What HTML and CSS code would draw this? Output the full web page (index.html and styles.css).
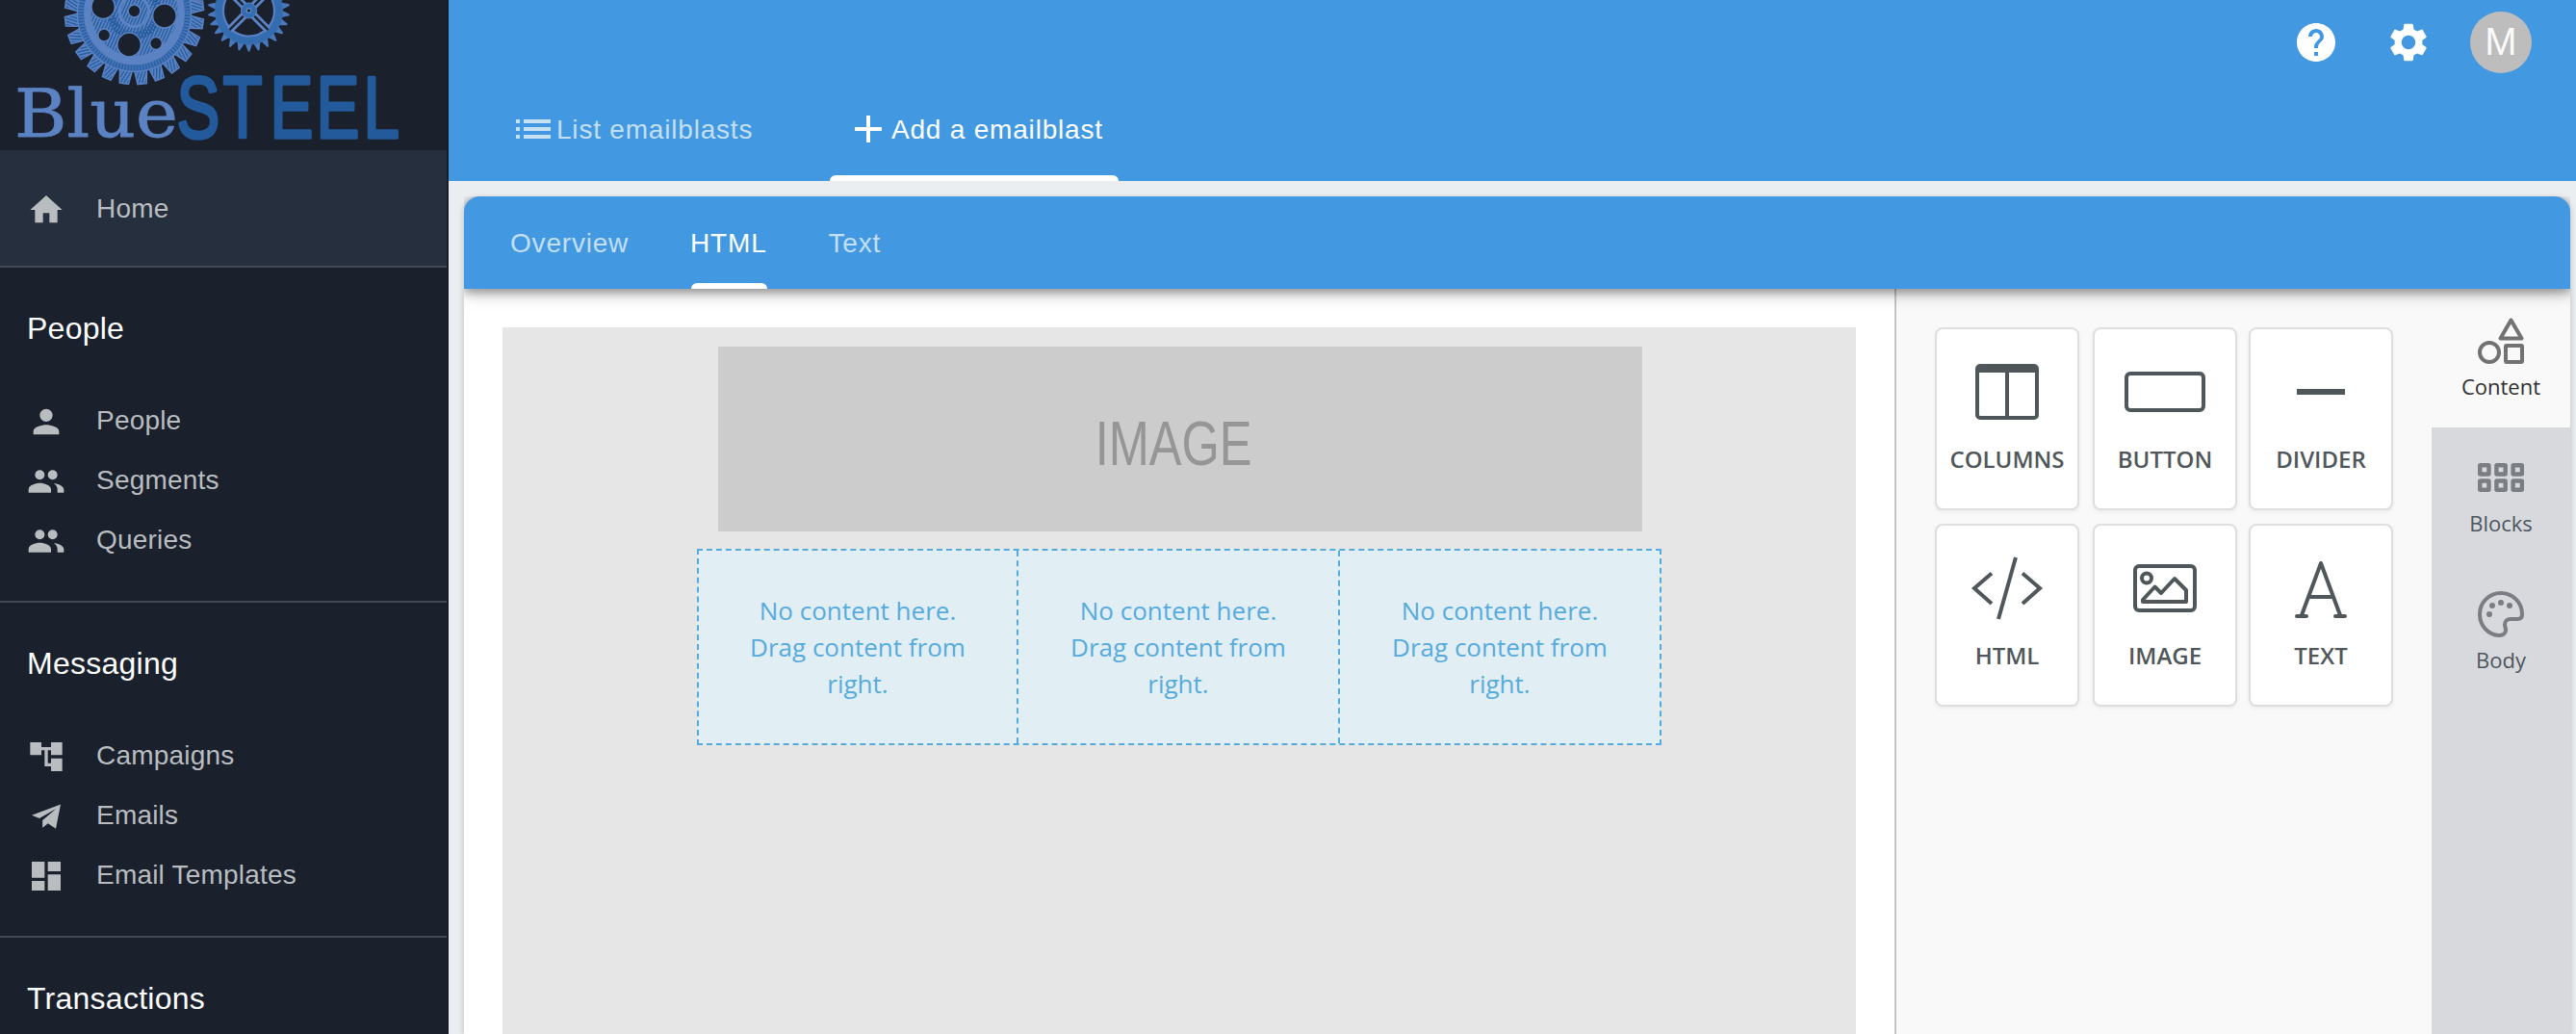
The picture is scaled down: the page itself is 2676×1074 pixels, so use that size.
FILE: index.html
```html
<!DOCTYPE html>
<html lang="en">
<head>
<meta charset="utf-8">
<title>BlueSteel - Add a emailblast</title>
<link rel="stylesheet" href="styles.css">
</head>
<body>
<div class="app">
  <aside class="sidebar">
    <svg class="logo" viewBox="0 0 464 156" role="img" aria-label="BlueSTEEL">
      <defs>
        <path id="tooth" d="M-6.500 60L-4.800 73.500H4.800L6.500 60Z"/>
        <path id="spike" d="M-3.800 34L-.8 42.500H.8L3.800 34Z"/>
        <pattern id="hatch" width="3.200" height="3.200" patternUnits="userSpaceOnUse" patternTransform="rotate(24)">
          <rect width="3.200" height="3.200" fill="#5b82c2"/><rect width="1.300" height="3.200" fill="#225a9b"/>
        </pattern>
      </defs>
      <g transform="translate(139.500 14) scale(.98 1)">
        <g class="tooth">
          <use href="#tooth" transform="rotate(-111.500)"/><use href="#tooth" transform="rotate(-96.500)"/>
          <use href="#tooth" transform="rotate(-81.500)"/><use href="#tooth" transform="rotate(-66.500)"/>
          <use href="#tooth" transform="rotate(-51.500)"/><use href="#tooth" transform="rotate(-36.500)"/>
          <use href="#tooth" transform="rotate(-21.500)"/><use href="#tooth" transform="rotate(-6.500)"/>
          <use href="#tooth" transform="rotate(8.500)"/><use href="#tooth" transform="rotate(23.500)"/>
          <use href="#tooth" transform="rotate(38.500)"/><use href="#tooth" transform="rotate(53.500)"/>
          <use href="#tooth" transform="rotate(68.500)"/><use href="#tooth" transform="rotate(83.500)"/>
          <use href="#tooth" transform="rotate(98.500)"/>
        </g>
        <circle r="61" fill="#5b82c2"/>
        <circle r="56.500" class="rim"/>
        <circle r="56.500" class="rim-lines"/>
        <circle cy="-2" r="46" fill="url(#hatch)"/>
        <circle cy="-2" r="25" class="hub-shade"/>
        <circle cy="-2" r="15.500" fill="url(#hatch)" stroke="#5b82c2" stroke-width="3"/>
        <g class="holes">
          <circle cx="-33" cy="-7" r="12.500"/><circle cx="32" cy="2.500" r="12.500"/>
          <circle cx="-5.500" cy="32.500" r="12.500"/><circle cx="-32" cy="22.500" r="6.500"/>
          <circle cx="23" cy="31" r="6.500"/><circle cy="-2.500" r="6.500"/>
        </g>
      </g>
      <g transform="translate(258.500 11)">
        <g fill="#4a78bb">
          <use href="#spike" transform="rotate(-112)"/><use href="#spike" transform="rotate(-98)"/>
          <use href="#spike" transform="rotate(-84)"/><use href="#spike" transform="rotate(-70)"/>
          <use href="#spike" transform="rotate(-56)"/><use href="#spike" transform="rotate(-42)"/>
          <use href="#spike" transform="rotate(-28)"/><use href="#spike" transform="rotate(-14)"/>
          <use href="#spike"/><use href="#spike" transform="rotate(14)"/>
          <use href="#spike" transform="rotate(28)"/><use href="#spike" transform="rotate(42)"/>
          <use href="#spike" transform="rotate(56)"/><use href="#spike" transform="rotate(70)"/>
          <use href="#spike" transform="rotate(84)"/><use href="#spike" transform="rotate(98)"/>
        </g>
        <circle r="31" fill="none" stroke="#346cb0" stroke-width="9"/>
        <circle r="26.500" fill="none" stroke="#5b82c2" stroke-width="2"/>
        <path d="M-20 20L20-20M-20-20L20 20" stroke="#5b82c2" stroke-width="8"/>
        <path d="M-20 20L20-20M-20-20L20 20" stroke="#1a202c" stroke-width="2.400"/>
        <circle r="8" fill="#346cb0" stroke="#5b82c2"/>
        <circle r="2.300" fill="#1a202c" stroke="#5b82c2" stroke-width="1.500"/>
      </g>
      <text class="logo-blue" x="15" y="142" textLength="170" lengthAdjust="spacingAndGlyphs">Blue</text>
      <text class="logo-steel" transform="scale(.74 1)" y="143" x="248 313 379 444 510">STEEL</text>
    </svg>
    <a class="nav-item home">
      <svg class="ico" viewBox="0 0 24 24"><path d="M10 20v-6h4v6h5v-8h3L12 3 2 12h3v8z"/></svg>Home</a>
    <section class="group">
      <h2>People</h2>
      <a class="nav-item"><svg class="ico" viewBox="0 0 24 24"><path d="M12 12c2.210 0 4-1.790 4-4s-1.790-4-4-4-4 1.790-4 4 1.790 4 4 4zm0 2c-2.670 0-8 1.340-8 4v2h16v-2c0-2.660-5.330-4-8-4z"/></svg>People</a>
      <a class="nav-item"><svg class="ico" viewBox="0 0 24 24"><path d="M16.670 13.130C18.040 14.060 19 15.320 19 17v2h4v-2c0-2.180-3.570-3.470-6.330-3.870zM8 11a3 3 0 1 0 0-6 3 3 0 0 0 0 6zM16 11a3 3 0 1 0 0-6 3 3 0 0 0 0 6zM8 13c-2.670 0-7 1.340-7 4v2h14v-2c0-2.660-4.330-4-7-4z"/></svg>Segments</a>
      <a class="nav-item"><svg class="ico" viewBox="0 0 24 24"><path d="M16.670 13.130C18.040 14.060 19 15.320 19 17v2h4v-2c0-2.180-3.570-3.470-6.330-3.870zM8 11a3 3 0 1 0 0-6 3 3 0 0 0 0 6zM16 11a3 3 0 1 0 0-6 3 3 0 0 0 0 6zM8 13c-2.670 0-7 1.340-7 4v2h14v-2c0-2.660-4.330-4-7-4z"/></svg>Queries</a>
    </section>
    <section class="group">
      <h2>Messaging</h2>
      <a class="nav-item"><svg class="ico" viewBox="0 0 24 24"><path d="M22 11V3h-7v3H9V3H2v8h7V8h2v10h4v3h7v-8h-7v3h-2V8h2v3z"/></svg>Campaigns</a>
      <a class="nav-item"><svg class="ico" viewBox="0 0 24 24"><path d="M3 11.300L21 4.500 18 19.700 13.100 16.300 9.700 19V14.400L18.200 7.200 7.700 13.200Z"/></svg>Emails</a>
      <a class="nav-item"><svg class="ico" viewBox="0 0 24 24"><path d="M3 13h8V3H3v10zm0 8h8v-6H3v6zm10 0h8V11h-8v10zm0-18v6h8V3h-8z"/></svg>Email Templates</a>
    </section>
    <section class="group">
      <h2>Transactions</h2>
    </section>
  </aside>
  <main class="main">
    <header class="topbar">
      <div class="actions">
        <svg class="ico48" viewBox="0 0 24 24"><path d="M12 2C6.480 2 2 6.480 2 12s4.480 10 10 10 10-4.480 10-10S17.520 2 12 2zm1 17h-2v-2h2v2zm2.070-7.750l-.9.920C13.450 12.900 13 13.500 13 15h-2v-.5c0-1.100.45-2.100 1.170-2.830l1.240-1.260c.37-.36.590-.86.590-1.410 0-1.100-.9-2-2-2s-2 .9-2 2H8c0-2.210 1.790-4 4-4s4 1.790 4 4c0 .88-.36 1.680-.93 2.250z"/></svg>
        <svg class="ico48" viewBox="0 0 24 24"><path d="M19.140 12.940c.04-.3.060-.61.060-.94 0-.32-.02-.64-.07-.94l2.030-1.580c.18-.14.230-.41.120-.61l-1.920-3.320c-.12-.22-.37-.29-.59-.22l-2.390.96c-.5-.38-1.030-.7-1.620-.94l-.36-2.540c-.04-.24-.24-.41-.48-.41h-3.840c-.24 0-.43.170-.47.410l-.36 2.540c-.59.240-1.130.57-1.620.94l-2.390-.96c-.22-.08-.47 0-.59.220L2.740 8.870c-.12.210-.08.470.12.610l2.030 1.580c-.05.300-.09.630-.09.940s.02.640.07.940l-2.030 1.580c-.18.140-.23.410-.12.610l1.920 3.320c.12.220.37.290.59.220l2.390-.96c.5.380 1.030.7 1.620.94l.36 2.540c.05.240.24.410.48.410h3.840c.24 0 .44-.17.470-.41l.36-2.540c.59-.24 1.130-.56 1.620-.94l2.390.96c.22.080.47 0 .59-.22l1.920-3.320c.12-.22.070-.47-.12-.61l-2.010-1.580zM12 15.600c-1.980 0-3.600-1.620-3.600-3.600s1.620-3.600 3.600-3.600 3.600 1.620 3.600 3.600-1.620 3.600-3.600 3.600z"/></svg>
        <div class="avatar">M</div>
      </div>
      <nav class="page-tabs">
        <a class="tab"><svg class="ico48" viewBox="0 0 24 24"><path d="M3 13h2v-2H3v2zm0 4h2v-2H3v2zm0-8h2V7H3v2zm4 4h14v-2H7v2zm0 4h14v-2H7v2zM7 7v2h14V7H7z"/></svg>List emailblasts</a>
        <a class="tab active"><svg class="ico48" viewBox="0 0 24 24"><path d="M19 13h-6v6h-2v-6H5v-2h6V5h2v6h6v2z"/></svg>Add a emailblast</a>
      </nav>
    </header>
    <div class="card">
      <nav class="card-tabs">
        <a class="tab">Overview</a>
        <a class="tab active">HTML</a>
        <a class="tab">Text</a>
      </nav>
      <div class="editor">
        <div class="stage">
          <div class="canvas">
            <div class="image-slot"><span>IMAGE</span></div>
            <div class="drop-row">
              <div class="drop">No content here. Drag content from right.</div>
              <div class="drop">No content here. Drag content from right.</div>
              <div class="drop">No content here. Drag content from right.</div>
            </div>
          </div>
        </div>
        <div class="tools">
          <div class="tool"><svg viewBox="0 0 80 70"><rect x="9" y="8" width="62" height="54" rx="3"/><path d="M40 10V62"/><path d="M9 11H71" stroke-width="8"/></svg>COLUMNS</div>
          <div class="tool"><svg viewBox="0 0 84 70"><rect x="2" y="16" width="80" height="38" rx="4"/></svg>BUTTON</div>
          <div class="tool"><svg viewBox="0 0 80 70"><path d="M15 35H65" stroke-width="6"/></svg>DIVIDER</div>
          <div class="tool"><svg viewBox="0 0 80 70"><path d="M24 19.500L6 35 24 51M56 19.500L74 35 56 51M49 3L31 67"/></svg>HTML</div>
          <div class="tool"><svg viewBox="0 0 80 70"><rect x="9" y="12" width="62" height="46" rx="4"/><circle cx="21" cy="24.500" r="5"/><path d="M17 49V47L29.500 33.500 36 40 50 25 62 37V49Z" stroke-linejoin="round"/></svg>IMAGE</div>
          <div class="tool"><svg viewBox="0 0 80 70"><path d="M20 63L40 9 60 63M27 44H53M15 64H25M55 64H65" stroke-linecap="round" stroke-linejoin="round"/></svg>TEXT</div>
        </div>
        <div class="rail">
          <div class="rail-tab selected"><svg viewBox="0 0 48 48"><path d="M34.500 2.500L45.500 21.500H23.500Z"/><circle cx="12" cy="36" r="10"/><rect x="29" y="29" width="17" height="17" rx="1"/></svg>Content</div>
          <div class="rail-tab"><svg viewBox="0 0 48 48"><g stroke-width="4.400"><rect x="2.200" y="11.200" width="9.300" height="9.300" rx=".5"/><rect x="19.400" y="11.200" width="9.300" height="9.300" rx=".5"/><rect x="36.600" y="11.200" width="9.300" height="9.300" rx=".5"/><rect x="2.200" y="27.500" width="9.300" height="9.300" rx=".5"/><rect x="19.400" y="27.500" width="9.300" height="9.300" rx=".5"/><rect x="36.600" y="27.500" width="9.300" height="9.300" rx=".5"/></g></svg>Blocks</div>
          <div class="rail-tab"><svg viewBox="0 0 48 48"><path d="M24 2C11.800 2 2 11.800 2 24S11 45.500 22 46C26.500 46.200 29.500 43.500 29 39.500 28.600 37.500 28 36.500 28 34.500 28 31 30.500 29 34 29H41.500C44.500 29 46 27 46 24 46 11.800 36.200 2 24 2Z"/><g class="dots"><circle cx="12" cy="24" r="3"/><circle cx="15" cy="15" r="3"/><circle cx="24" cy="12" r="3"/><circle cx="33" cy="15" r="3"/></g></svg>Body</div>
        </div>
      </div>
    </div>
  </main>
</div>
</body>
</html>
```
FILE: styles.css
```css
* { box-sizing: border-box; }
body {
  margin: 0;
  font-family: "Liberation Sans", Arial, sans-serif;
  font-size: 28px;
  overflow: hidden;
}
.app { display: flex; width: 100vw; height: 100vh; background: #ebeef1; }
svg { flex: none; }

.sidebar {
  flex: none;
  width: 466px;
  height: 100%;
  overflow: hidden;
  background: #1a202c;
  border-right: 2px solid #171c26;
}
.logo { display: block; width: 464px; height: 156px; overflow: visible; }
.tooth { fill: url(#hatch); stroke: #5b82c2; stroke-width: 1.5px; }
.rim { fill: none; stroke: #2b62a5; stroke-width: 6px; }
.rim-lines { fill: none; stroke: #5079bc; stroke-width: 6px; stroke-dasharray: 1.2 2; }
.hub-shade { fill: none; stroke: #225a9b; stroke-width: 8px; stroke-dasharray: 1.6 1.4; }
.holes { fill: #1a202c; stroke: #5b82c2; stroke-width: 1.5px; }
.logo-blue {
  font: 70px "DejaVu Serif", serif;
  fill: #5b82c2;
  stroke: #5b82c2;
  stroke-width: .8px;
  stroke-linejoin: round;
}
.logo-steel {
  font: 91px "Liberation Sans", sans-serif;
  fill: #225a9b;
  stroke: #225a9b;
  stroke-width: 3.4px;
  stroke-linejoin: round;
}
.nav-item {
  display: flex;
  align-items: center;
  height: 62px;
  padding-left: 28px;
  gap: 32px;
  line-height: 32px;
  letter-spacing: .2px;
  color: #b9bdc0;
}
.ico { width: 40px; height: 40px; margin-top: 2px; fill: currentColor; }
.home { height: 122px; padding-top: 2px; background: #262f3e; border-bottom: 2px solid #424854; }
.group { height: 348px; padding-top: 44px; border-bottom: 2px solid #424854; }
.group h2 {
  margin: 0 0 45px 28px;
  height: 39px;
  line-height: 39px;
  font-size: 32px;
  font-weight: 400;
  letter-spacing: .25px;
  color: #fff;
}

.main { flex: 1; display: flex; flex-direction: column; min-width: 0; }
.topbar { flex: none; height: 188px; background: #4299e1; color: #fff; }
.actions {
  display: flex;
  align-items: center;
  justify-content: flex-end;
  gap: 48px;
  height: 80px;
  padding: 8px 46px 0 0;
}
.actions .avatar { margin-left: -8px; }
.ico48 { width: 48px; height: 48px; fill: currentColor; }
.avatar {
  width: 64px;
  height: 64px;
  border-radius: 50%;
  background: #bdbdbd;
  color: #fafafa;
  font-size: 40px;
  line-height: 62px;
  text-align: center;
}
.page-tabs { display: flex; gap: 48px; height: 108px; padding-left: 48px; }
.tab {
  display: flex;
  align-items: center;
  padding-top: 2px;
  color: rgba(255, 255, 255, .7);
  letter-spacing: .8px;
  white-space: nowrap;
}
.tab .ico48 { margin-top: -2px; }
.tab.active { color: #fff; }
.tab.active::after {
  content: "";
  flex: none;
  align-self: flex-end;
  height: 6px;
  border-radius: 6px 6px 0 0;
  background: #fff;
}
.page-tabs .tab { padding: 2px 16px 0; width: 300px; }
.page-tabs .tab.active::after { width: 300px; margin-left: -284px; }

.card {
  flex: 1;
  display: flex;
  flex-direction: column;
  min-height: 0;
  margin: 16px 6px 0 16px;
  border-radius: 16px 16px 0 0;
  background: #fff;
  box-shadow: 0 2px 6px rgba(0, 0, 0, .22);
}
.card-tabs {
  position: relative;
  flex: none;
  display: flex;
  gap: 64px;
  height: 96px;
  padding-left: 48px;
  border-radius: 16px 16px 0 0;
  background: #4299e1;
  box-shadow: 0 4px 18px rgba(0, 0, 0, .28), 0 4px 8px rgba(0, 0, 0, .25);
  clip-path: inset(0 0 -30px 0);
}
.card-tabs .tab.active::after { width: 79px; margin-left: -79px; }
.editor { flex: 1; display: flex; min-height: 0; }
.stage { width: 1486px; padding: 40px 40px 0; }
.canvas {
  display: flex;
  flex-direction: column;
  align-items: center;
  gap: 18px;
  height: 100%;
  padding-top: 20px;
  background: #e6e6e6;
}
.image-slot {
  display: flex;
  align-items: center;
  justify-content: center;
  width: 960px;
  height: 192px;
  margin-left: 2px;
  padding: 9px 13px 0 0;
  background: #ccc;
}
.image-slot span { font-size: 64px; color: #969696; transform: scaleX(.79); }
.drop-row {
  display: grid;
  grid-template-columns: 332px 334px 332px;
  height: 204px;
  border: 2px dashed #57abdc;
  width: 1002px;
  background: #e1eef4;
}
.drop {
  display: flex;
  align-items: center;
  padding: 0 47px 0 47px;
  border-right: 2px dashed #57abdc;
  font: 26px/38px "Open Sans", sans-serif;
  text-align: center;
  color: #57abdc;
}
.drop:last-child { border-right: 0; }
.tools {
  flex: none;
  display: grid;
  grid-template-columns: repeat(3, 150px);
  grid-auto-rows: 190px;
  gap: 14px 13px;
  width: 558px;
  padding: 40px 40px 0;
  border-left: 2px solid #c4c4c4;
  background: #f9f9f9;
}
.tool {
  display: flex;
  flex-direction: column;
  align-items: center;
  padding-top: 30px;
  border: 2px solid #dedede;
  border-radius: 8px;
  background: #fff;
  box-shadow: 0 2px 4px rgba(0, 0, 0, .06);
  font: 600 24px/34px "Open Sans", sans-serif;
  color: #50575a;
}
.tool:nth-child(3n + 2) { margin: 0 -1px 0 1px; }
.tool svg { height: 70px; margin-bottom: 18px; fill: none; stroke: currentColor; stroke-width: 4px; }
.rail {
  flex: none;
  width: 144px;
  background: #d8d9dd;
}
.rail-tab {
  display: flex;
  flex-direction: column;
  align-items: center;
  gap: 8px;
  height: 142px;
  padding-top: 28px;
  font: 22px/30px "Open Sans", sans-serif;
  color: #4d565e;
}
.rail-tab svg { width: 48px; height: 48px; fill: none; stroke: #7b7d84; stroke-width: 4px; stroke-linejoin: round; }
.rail-tab .dots { fill: #7b7d84; stroke: none; }
.rail-tab.selected { height: 144px; padding-top: 30px; background: #f9f9f9; color: #2f2f2f; }
.rail-tab.selected svg { stroke: #727272; }
```
